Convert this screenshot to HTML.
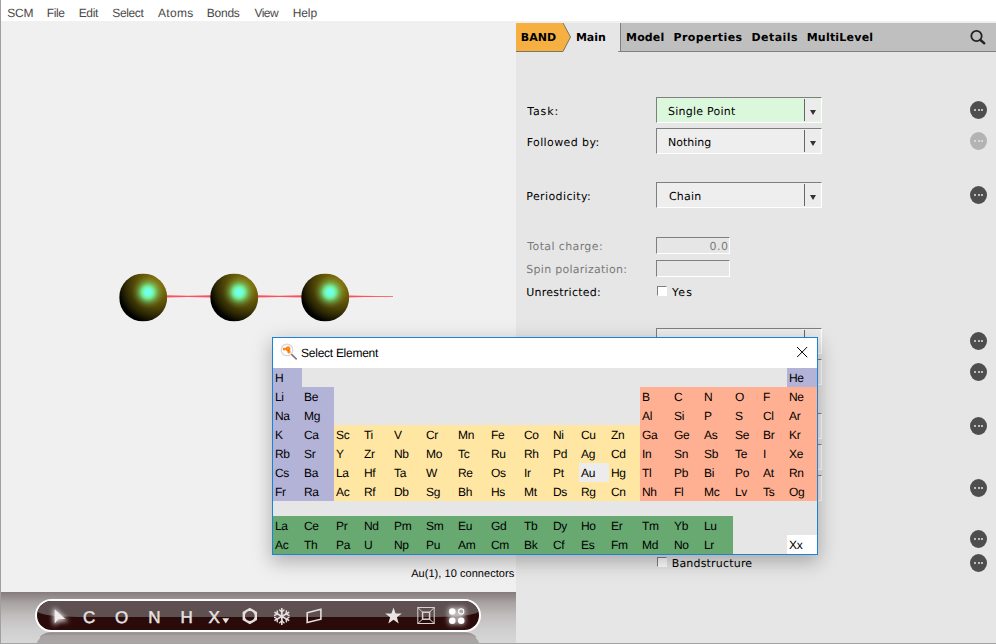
<!DOCTYPE html>
<html><head><meta charset="utf-8"><title>BAND</title>
<style>
html,body{margin:0;padding:0}
body{width:996px;height:644px;position:relative;overflow:hidden;background:#fff;font-family:"DejaVu Sans","Liberation Sans",sans-serif;font-size:11px;color:#000;text-rendering:geometricPrecision}
.abs{position:absolute}
.tx{position:absolute;white-space:nowrap;line-height:20px;font-size:11px;font-family:"DejaVu Sans","Liberation Sans",sans-serif}
.mn{font-family:"Liberation Sans",sans-serif;font-size:12px;color:#4a4a4a}
.tk{font-family:"Liberation Sans",sans-serif;font-size:17px;color:#e8e2e2;-webkit-text-stroke:0.45px #e8e2e2}
.tb{font-weight:bold}
.ar{font-family:"Liberation Sans",sans-serif}
.dis{color:#7a7a7a}
#menubar{position:absolute;left:0;top:0;width:996px;height:21px;background:#fff}
#leftedge{position:absolute;left:0;top:0;width:1px;height:644px;background:#a0a0a0}
#view{position:absolute;left:1px;top:21px;width:515px;height:571px;background:#f0f0f0}
#right{position:absolute;left:516px;top:21px;width:480px;height:623px;background:#e6e6e6}
#rstrip{position:absolute;left:516px;top:21px;width:480px;height:2px;background:#f0f0f0}
#tabbar{position:absolute;left:620px;top:23px;width:376px;height:29px;background:#bfbfbf;border-left:1px solid #808080;border-bottom:1px solid #808080;box-sizing:border-box}
.combo{position:absolute;left:656px;width:166px;box-sizing:border-box;border:1px solid;border-color:#7f7f7f #fff #fff #7f7f7f}
.combo .cb{position:absolute;right:1px;top:1px;bottom:1px;width:15px;background:#ececec;border-left:1px solid #666}
.combo .cb b{position:absolute;left:4.5px;top:10.5px;width:0;height:0;border-left:3.5px solid transparent;border-right:3.5px solid transparent;border-top:5px solid #333}
.entry{position:absolute;left:656px;width:74px;height:17px;box-sizing:border-box;border:1px solid;border-color:#7f7f7f #fff #fff #7f7f7f;background:#e6e6e6}
.chk{position:absolute;left:657px;width:10px;height:10px;box-sizing:border-box;background:#fff;border:1px solid;border-color:#7f7f7f #fff #fff #7f7f7f}
.dots{position:absolute;left:970px;width:17px;height:18px;border-radius:50%}
.dots i{position:absolute;top:8px;width:2.2px;height:2.2px;border-radius:50%;background:#e4e4e4}
.dots i:nth-child(1){left:4px}.dots i:nth-child(2){left:7.5px}.dots i:nth-child(3){left:11px}
#dialog{position:absolute;left:272px;top:337px;width:546px;height:218px;box-sizing:border-box;border:1px solid #1883d7;background:#e6e6e6;box-shadow:0 6px 18px 1px rgba(0,0,0,0.27)}
#dtitle{position:absolute;left:0;top:0;width:544px;height:30px;background:#fff}
.el{position:absolute;height:19px;line-height:19px;box-sizing:border-box;padding-left:2px;padding-top:1px;font-family:"Liberation Sans",sans-serif;font-size:12px;white-space:nowrap;letter-spacing:-0.3px}
.atom{position:absolute;width:48px;height:48px;border-radius:50%;background:radial-gradient(circle at 60% 39%, rgba(115,255,253,1) 0.0px, rgba(115,255,232,1) 2.6px, rgba(114,255,192,0.97) 4.5px, rgba(113,255,166,0.82) 6.5px, rgba(113,255,167,0.52) 8.5px, rgba(112,255,163,0.30) 10.4px, rgba(112,255,160,0.11) 13.0px, rgba(112,255,160,0) 16.2px),radial-gradient(circle at 75% 25%, #84740d 0.0px, #7b6c0c 7.7px, #6e610a 13.2px, #5c5108 18.7px, #4c4307 23.1px, #3d3606 26.4px, #2f2904 29.7px, #231f03 31.9px, #141202 34.7px, #000 38.0px)}
#bbar{position:absolute;left:1px;top:592px;width:515px;height:52px;background:linear-gradient(to bottom,#857b7b 0%,#a9a3a3 21%,#bfbcbc 44%,#d0cfcf 73%,#d8d8d8 100%);overflow:hidden}
#pill{position:absolute;left:34px;top:7.4px;width:446px;height:33px;box-sizing:border-box;border:2px solid #fff;border-radius:17px;background:#2b0a0a;overflow:hidden}
#gloss{position:absolute;left:0;top:0;width:442px;height:15.5px;background:#5e5050;border-radius:14px 14px 60px 60px / 14px 14px 9px 9px}
#refl{position:absolute;left:34px;top:40.4px;width:446px;height:33px;box-sizing:border-box;border:1.5px solid rgba(225,225,225,0.75);border-top-color:rgba(150,142,142,0.6);border-radius:17px;background:linear-gradient(to bottom,#938c8c 0px,#a8a2a2 3px,#aca7a7 12px)}
#botline{position:absolute;left:0;top:643px;width:996px;height:1px;background:#a3a3a3}
.tl{position:absolute;color:#e9e4e4;font-family:"Liberation Sans",sans-serif;font-size:17.5px;line-height:20px}
</style></head><body>
<div id="menubar">
<span class="tx mn" style="left:7.3px;top:3px;letter-spacing:-0.25px;">SCM</span><span class="tx mn" style="left:46.8px;top:3px;letter-spacing:-0.43px;">File</span><span class="tx mn" style="left:78.7px;top:3px;letter-spacing:-0.33px;">Edit</span><span class="tx mn" style="left:112.3px;top:3px;letter-spacing:-0.36px;">Select</span><span class="tx mn" style="left:158.1px;top:3px;letter-spacing:0.26px;">Atoms</span><span class="tx mn" style="left:206.8px;top:3px;letter-spacing:-0.25px;">Bonds</span><span class="tx mn" style="left:254.5px;top:3px;letter-spacing:-0.58px;">View</span><span class="tx mn" style="left:292.7px;top:3px;letter-spacing:-0.09px;">Help</span>
</div>
<div id="view">
  <svg class="abs" style="left:0;top:0" width="515" height="571" viewBox="0 0 515 571"><path fill="#ff4f5c" d="M164 274.29999999999995 Q187.5 275.15 211 274.29999999999995 L211 276.5 Q187.5 275.65 164 276.5 Z M255 274.29999999999995 Q278.5 275.15 302 274.29999999999995 L302 276.5 Q278.5 275.65 255 276.5 Z M346 274.29999999999995 Q358 274.95 392 275.0 L392 275.79999999999995 Q358 275.84999999999997 346 276.5 Z"/></svg>
  <div class="atom" style="left:118px;top:252px;transform:translate(0.2px,0.5px)"></div>
  <div class="atom" style="left:209px;top:252px;transform:translate(0.2px,0.5px)"></div>
  <div class="atom" style="left:300px;top:252px;transform:translate(0.2px,0.5px)"></div>
</div>
<span class="tx ar" style="left:411.2px;top:564px;letter-spacing:0.05px;">Au(1), 10 connectors</span>
<div id="bbar">
  <div id="refl"></div>
  <div id="pill"><div id="gloss"></div></div>
</div>
<span class="tx tk" style="left:83.0px;top:608px;letter-spacing:0.0px;">C</span><span class="tx tk" style="left:115.0px;top:608px;letter-spacing:0.0px;">O</span><span class="tx tk" style="left:148.2px;top:608px;letter-spacing:0.0px;">N</span><span class="tx tk" style="left:180.4px;top:608px;letter-spacing:0.0px;">H</span><span class="tx tk" style="left:208.4px;top:608px;letter-spacing:0.0px;">X</span>
<svg class="abs" style="left:35px;top:599px" width="446" height="34" viewBox="35 599 446 34">
 <defs><filter id="gl" x="-80%" y="-80%" width="260%" height="260%"><feGaussianBlur stdDeviation="2.6"/></filter></defs>
 <g fill="#fff" filter="url(#gl)" opacity="0.9"><path d="M53.5 607.5 L53.5 625.5 L59 621.2 L68.5 621.2 Z"/><path d="M54 608.5 L54 624.5 L58.3 620.2 L67 620.2 Z"/></g>
 <path d="M54.7 609.2 L54.7 623.6 L58.5 619.1 L65.3 619.1 Z" fill="#f1eded"/>
 <path d="M222.3 618.2 H229.2 L225.75 623.6 Z" fill="#e8e2e2"/>
 <path fill-rule="evenodd" fill="#e4dede" d="M249.8 607.8 L257 611.9 L257 620.1 L249.8 624.2 L242.6 620.1 L242.6 611.9 Z M249.8 611.1 A4.9 4.9 0 1 0 249.8 620.9 A4.9 4.9 0 1 0 249.8 611.1 Z"/>
 <g stroke="#e4dede" stroke-width="1.7" stroke-linecap="round" fill="none">
  <path d="M281.8 608.6 V624.2 M275 612.5 L288.6 620.3 M275 620.3 L288.6 612.5"/>
  <path stroke-width="1.4" d="M279.6 610 L281.8 612 L284 610 M279.6 622.8 L281.8 620.8 L284 622.8 M274.6 615.4 L277.5 614 L277.2 610.9 M289 615.4 L286.1 614 L286.4 610.9 M274.6 617.4 L277.5 618.8 L277.2 621.9 M289 617.4 L286.1 618.8 L286.4 621.9"/>
 </g>
 <path d="M307.2 612.8 L320.9 609.2 L320.9 619.2 L307.2 622.6 Z" fill="none" stroke="#e4dede" stroke-width="1.6" stroke-linejoin="miter"/>
 <path fill="#e9e4e4" d="M393.5 607.4 L395.6 613.4 L401.9 613.5 L396.9 617.3 L398.7 623.4 L393.5 619.8 L388.3 623.4 L390.1 617.3 L385.1 613.5 L391.4 613.4 Z"/>
 <g fill="none" stroke="#d9d2d2"><rect x="417.8" y="607.5" width="16.4" height="16" stroke-width="1"/><rect x="422.6" y="612.2" width="7" height="7" stroke-width="1.5"/><path stroke-width="1" d="M417.8 607.5 L422.6 612.2 M434.2 607.5 L429.6 612.2 M417.8 623.5 L422.6 619.2 M434.2 623.5 L429.6 619.2"/></g>
 <g filter="url(#gl)" fill="#fff" opacity="0.6"><circle cx="456.7" cy="616.1" r="8"/><circle cx="452.3" cy="611.5" r="4.5"/><circle cx="461.2" cy="620.7" r="4.5"/><circle cx="452.3" cy="620.7" r="4.5"/><circle cx="461.2" cy="611.5" r="4.5"/></g>
 <circle cx="452.3" cy="611.5" r="3.3" fill="#fff"/><circle cx="452.3" cy="620.7" r="3.3" fill="#fff"/><circle cx="461.2" cy="620.7" r="3.3" fill="#fff"/><circle cx="461.2" cy="611.5" r="2.6" fill="none" stroke="#fff" stroke-width="1.1"/>
</svg>
<div id="right"></div>
<div id="rstrip"></div>
<svg class="abs" style="left:516px;top:23px" width="56" height="30" viewBox="0 0 56 30"><path d="M0 0 H47 L54.5 14 L47 28.5 H0 Z" fill="#f5b041"/><path d="M0 28.5 H47 L54.5 14 L47 0" fill="none" stroke="#7a7465" stroke-width="1"/></svg>
<div id="tabbar"></div><div class="abs" style="left:618px;top:51px;width:2px;height:1px;background:#8a8a8a"></div>
<span class="tx tb" style="left:520.7px;top:28px;letter-spacing:0.09px;">BAND</span><span class="tx tb" style="left:575.9px;top:28px;letter-spacing:-0.02px;">Main</span><span class="tx tb" style="left:626.1px;top:28px;letter-spacing:0.12px;">Model</span><span class="tx tb" style="left:673.5px;top:28px;letter-spacing:0.42px;">Properties</span><span class="tx tb" style="left:751.5px;top:28px;letter-spacing:0.46px;">Details</span><span class="tx tb" style="left:806.7px;top:28px;letter-spacing:0.22px;">MultiLevel</span>
<svg class="abs" style="left:966px;top:26px" width="24" height="22" viewBox="0 0 24 22"><circle cx="10.5" cy="10" r="5.2" fill="none" stroke="#222" stroke-width="1.8"/><path d="M14.5 14 L18.3 17.3" stroke="#222" stroke-width="2.4" stroke-linecap="round"/></svg>

<span class="tx " style="left:527.2px;top:102px;letter-spacing:0.87px;">Task:</span>
<div class="combo" style="top:97px;height:26px;background:#dcf8dc"><span class="cb"><b></b></span></div><span class="tx " style="left:668.0px;top:102px;letter-spacing:0.24px;">Single Point</span>
<div class="dots" style="top:101px;background:#4e4e4e"><i></i><i></i><i></i></div>
<span class="tx " style="left:526.7px;top:133px;letter-spacing:0.4px;">Followed by:</span>
<div class="combo" style="top:128px;height:26px;background:#eeeeee"><span class="cb"><b></b></span></div><span class="tx " style="left:668.0px;top:133px;letter-spacing:-0.0px;">Nothing</span>
<div class="dots" style="top:132px;background:#b3b3b3"><i></i><i></i><i></i></div>
<span class="tx " style="left:526.3px;top:187px;letter-spacing:0.39px;">Periodicity:</span>
<div class="combo" style="top:182px;height:26px;background:#eeeeee"><span class="cb"><b></b></span></div><span class="tx " style="left:669.0px;top:187px;letter-spacing:0.18px;">Chain</span>
<div class="dots" style="top:186px;background:#4e4e4e"><i></i><i></i><i></i></div>
<span class="tx dis" style="left:527.3px;top:237px;letter-spacing:0.38px;">Total charge:</span>
<div class="entry" style="top:237px"></div><span class="tx dis" style="left:709.6px;top:237px;letter-spacing:0.51px;">0.0</span>
<span class="tx dis" style="left:526.3px;top:260px;letter-spacing:0.28px;">Spin polarization:</span>
<div class="entry" style="top:260px"></div>
<span class="tx " style="left:526.3px;top:283px;letter-spacing:0.24px;">Unrestricted:</span>
<div class="chk" style="top:286px"></div>
<span class="tx " style="left:672.0px;top:283px;letter-spacing:1.1px;">Yes</span>
<div class="combo" style="top:328px;height:26px;background:#eeeeee"><span class="cb"><b></b></span></div>
<div class="dots" style="top:332px;background:#4e4e4e"><i></i><i></i><i></i></div>
<div class="combo" style="top:359px;height:26px;background:#eeeeee"><span class="cb"><b></b></span></div>
<div class="dots" style="top:363px;background:#4e4e4e"><i></i><i></i><i></i></div>
<div class="combo" style="top:413px;height:26px;background:#eeeeee"><span class="cb"><b></b></span></div>
<div class="dots" style="top:417px;background:#4e4e4e"><i></i><i></i><i></i></div>
<div class="combo" style="top:444px;height:26px;background:#eeeeee"><span class="cb"><b></b></span></div>
<div class="combo" style="top:475px;height:26px;background:#eeeeee"><span class="cb"><b></b></span></div>
<div class="dots" style="top:479px;background:#4e4e4e"><i></i><i></i><i></i></div>
<div class="dots" style="top:530px;background:#4e4e4e"><i></i><i></i><i></i></div>
<div class="chk" style="top:557px"></div>
<span class="tx " style="left:671.7px;top:554px;letter-spacing:0.19px;">Bandstructure</span>
<div class="dots" style="top:554px;background:#4e4e4e"><i></i><i></i><i></i></div>

<div id="dialog">
  <div id="dtitle">
  <svg class="abs" style="left:524px;top:9px" width="12" height="12" viewBox="0 0 12 12"><path d="M0 0 L10.2 10.2 M10.2 0 L0 10.2" stroke="#000" stroke-width="1" fill="none"/></svg>
  </div>
<div class="el" style="left:0px;top:30px;width:29px;background:#b3b3d8">H</div>
<div class="el" style="left:514px;top:30px;width:30px;background:#b3b3d8">He</div>
<div class="el" style="left:0px;top:49px;width:29px;background:#b3b3d8">Li</div>
<div class="el" style="left:29px;top:49px;width:32px;background:#b3b3d8">Be</div>
<div class="el" style="left:367px;top:49px;width:32px;background:#ffb092">B</div>
<div class="el" style="left:399px;top:49px;width:30px;background:#ffb092">C</div>
<div class="el" style="left:429px;top:49px;width:31px;background:#ffb092">N</div>
<div class="el" style="left:460px;top:49px;width:28px;background:#ffb092">O</div>
<div class="el" style="left:488px;top:49px;width:26px;background:#ffb092">F</div>
<div class="el" style="left:514px;top:49px;width:30px;background:#ffb092">Ne</div>
<div class="el" style="left:0px;top:68px;width:29px;background:#b3b3d8">Na</div>
<div class="el" style="left:29px;top:68px;width:32px;background:#b3b3d8">Mg</div>
<div class="el" style="left:367px;top:68px;width:32px;background:#ffb092">Al</div>
<div class="el" style="left:399px;top:68px;width:30px;background:#ffb092">Si</div>
<div class="el" style="left:429px;top:68px;width:31px;background:#ffb092">P</div>
<div class="el" style="left:460px;top:68px;width:28px;background:#ffb092">S</div>
<div class="el" style="left:488px;top:68px;width:26px;background:#ffb092">Cl</div>
<div class="el" style="left:514px;top:68px;width:30px;background:#ffb092">Ar</div>
<div class="el" style="left:0px;top:87px;width:29px;background:#b3b3d8">K</div>
<div class="el" style="left:29px;top:87px;width:32px;background:#b3b3d8">Ca</div>
<div class="el" style="left:61px;top:87px;width:28px;background:#ffe7a3">Sc</div>
<div class="el" style="left:89px;top:87px;width:30px;background:#ffe7a3">Ti</div>
<div class="el" style="left:119px;top:87px;width:32px;background:#ffe7a3">V</div>
<div class="el" style="left:151px;top:87px;width:32px;background:#ffe7a3">Cr</div>
<div class="el" style="left:183px;top:87px;width:33px;background:#ffe7a3">Mn</div>
<div class="el" style="left:216px;top:87px;width:33px;background:#ffe7a3">Fe</div>
<div class="el" style="left:249px;top:87px;width:29px;background:#ffe7a3">Co</div>
<div class="el" style="left:278px;top:87px;width:28px;background:#ffe7a3">Ni</div>
<div class="el" style="left:306px;top:87px;width:30px;background:#ffe7a3">Cu</div>
<div class="el" style="left:336px;top:87px;width:31px;background:#ffe7a3">Zn</div>
<div class="el" style="left:367px;top:87px;width:32px;background:#ffb092">Ga</div>
<div class="el" style="left:399px;top:87px;width:30px;background:#ffb092">Ge</div>
<div class="el" style="left:429px;top:87px;width:31px;background:#ffb092">As</div>
<div class="el" style="left:460px;top:87px;width:28px;background:#ffb092">Se</div>
<div class="el" style="left:488px;top:87px;width:26px;background:#ffb092">Br</div>
<div class="el" style="left:514px;top:87px;width:30px;background:#ffb092">Kr</div>
<div class="el" style="left:0px;top:106px;width:29px;background:#b3b3d8">Rb</div>
<div class="el" style="left:29px;top:106px;width:32px;background:#b3b3d8">Sr</div>
<div class="el" style="left:61px;top:106px;width:28px;background:#ffe7a3">Y</div>
<div class="el" style="left:89px;top:106px;width:30px;background:#ffe7a3">Zr</div>
<div class="el" style="left:119px;top:106px;width:32px;background:#ffe7a3">Nb</div>
<div class="el" style="left:151px;top:106px;width:32px;background:#ffe7a3">Mo</div>
<div class="el" style="left:183px;top:106px;width:33px;background:#ffe7a3">Tc</div>
<div class="el" style="left:216px;top:106px;width:33px;background:#ffe7a3">Ru</div>
<div class="el" style="left:249px;top:106px;width:29px;background:#ffe7a3">Rh</div>
<div class="el" style="left:278px;top:106px;width:28px;background:#ffe7a3">Pd</div>
<div class="el" style="left:306px;top:106px;width:30px;background:#ffe7a3">Ag</div>
<div class="el" style="left:336px;top:106px;width:31px;background:#ffe7a3">Cd</div>
<div class="el" style="left:367px;top:106px;width:32px;background:#ffb092">In</div>
<div class="el" style="left:399px;top:106px;width:30px;background:#ffb092">Sn</div>
<div class="el" style="left:429px;top:106px;width:31px;background:#ffb092">Sb</div>
<div class="el" style="left:460px;top:106px;width:28px;background:#ffb092">Te</div>
<div class="el" style="left:488px;top:106px;width:26px;background:#ffb092">I</div>
<div class="el" style="left:514px;top:106px;width:30px;background:#ffb092">Xe</div>
<div class="el" style="left:0px;top:125px;width:29px;background:#b3b3d8">Cs</div>
<div class="el" style="left:29px;top:125px;width:32px;background:#b3b3d8">Ba</div>
<div class="el" style="left:61px;top:125px;width:28px;background:#ffe7a3">La</div>
<div class="el" style="left:89px;top:125px;width:30px;background:#ffe7a3">Hf</div>
<div class="el" style="left:119px;top:125px;width:32px;background:#ffe7a3">Ta</div>
<div class="el" style="left:151px;top:125px;width:32px;background:#ffe7a3">W</div>
<div class="el" style="left:183px;top:125px;width:33px;background:#ffe7a3">Re</div>
<div class="el" style="left:216px;top:125px;width:33px;background:#ffe7a3">Os</div>
<div class="el" style="left:249px;top:125px;width:29px;background:#ffe7a3">Ir</div>
<div class="el" style="left:278px;top:125px;width:28px;background:#ffe7a3">Pt</div>
<div class="el" style="left:306px;top:125px;width:30px;background:#ececec">Au</div>
<div class="el" style="left:336px;top:125px;width:31px;background:#ffe7a3">Hg</div>
<div class="el" style="left:367px;top:125px;width:32px;background:#ffb092">Tl</div>
<div class="el" style="left:399px;top:125px;width:30px;background:#ffb092">Pb</div>
<div class="el" style="left:429px;top:125px;width:31px;background:#ffb092">Bi</div>
<div class="el" style="left:460px;top:125px;width:28px;background:#ffb092">Po</div>
<div class="el" style="left:488px;top:125px;width:26px;background:#ffb092">At</div>
<div class="el" style="left:514px;top:125px;width:30px;background:#ffb092">Rn</div>
<div class="el" style="left:0px;top:144px;width:29px;background:#b3b3d8">Fr</div>
<div class="el" style="left:29px;top:144px;width:32px;background:#b3b3d8">Ra</div>
<div class="el" style="left:61px;top:144px;width:28px;background:#ffe7a3">Ac</div>
<div class="el" style="left:89px;top:144px;width:30px;background:#ffe7a3">Rf</div>
<div class="el" style="left:119px;top:144px;width:32px;background:#ffe7a3">Db</div>
<div class="el" style="left:151px;top:144px;width:32px;background:#ffe7a3">Sg</div>
<div class="el" style="left:183px;top:144px;width:33px;background:#ffe7a3">Bh</div>
<div class="el" style="left:216px;top:144px;width:33px;background:#ffe7a3">Hs</div>
<div class="el" style="left:249px;top:144px;width:29px;background:#ffe7a3">Mt</div>
<div class="el" style="left:278px;top:144px;width:28px;background:#ffe7a3">Ds</div>
<div class="el" style="left:306px;top:144px;width:30px;background:#ffe7a3">Rg</div>
<div class="el" style="left:336px;top:144px;width:31px;background:#ffe7a3">Cn</div>
<div class="el" style="left:367px;top:144px;width:32px;background:#ffb092">Nh</div>
<div class="el" style="left:399px;top:144px;width:30px;background:#ffb092">Fl</div>
<div class="el" style="left:429px;top:144px;width:31px;background:#ffb092">Mc</div>
<div class="el" style="left:460px;top:144px;width:28px;background:#ffb092">Lv</div>
<div class="el" style="left:488px;top:144px;width:26px;background:#ffb092">Ts</div>
<div class="el" style="left:514px;top:144px;width:30px;background:#ffb092">Og</div>
<div class="el" style="left:0px;top:178px;width:29px;background:#68a972">La</div>
<div class="el" style="left:29px;top:178px;width:32px;background:#68a972">Ce</div>
<div class="el" style="left:61px;top:178px;width:28px;background:#68a972">Pr</div>
<div class="el" style="left:89px;top:178px;width:30px;background:#68a972">Nd</div>
<div class="el" style="left:119px;top:178px;width:32px;background:#68a972">Pm</div>
<div class="el" style="left:151px;top:178px;width:32px;background:#68a972">Sm</div>
<div class="el" style="left:183px;top:178px;width:33px;background:#68a972">Eu</div>
<div class="el" style="left:216px;top:178px;width:33px;background:#68a972">Gd</div>
<div class="el" style="left:249px;top:178px;width:29px;background:#68a972">Tb</div>
<div class="el" style="left:278px;top:178px;width:28px;background:#68a972">Dy</div>
<div class="el" style="left:306px;top:178px;width:30px;background:#68a972">Ho</div>
<div class="el" style="left:336px;top:178px;width:31px;background:#68a972">Er</div>
<div class="el" style="left:367px;top:178px;width:32px;background:#68a972">Tm</div>
<div class="el" style="left:399px;top:178px;width:30px;background:#68a972">Yb</div>
<div class="el" style="left:429px;top:178px;width:31px;background:#68a972">Lu</div>
<div class="el" style="left:0px;top:197px;width:29px;background:#68a972">Ac</div>
<div class="el" style="left:29px;top:197px;width:32px;background:#68a972">Th</div>
<div class="el" style="left:61px;top:197px;width:28px;background:#68a972">Pa</div>
<div class="el" style="left:89px;top:197px;width:30px;background:#68a972">U</div>
<div class="el" style="left:119px;top:197px;width:32px;background:#68a972">Np</div>
<div class="el" style="left:151px;top:197px;width:32px;background:#68a972">Pu</div>
<div class="el" style="left:183px;top:197px;width:33px;background:#68a972">Am</div>
<div class="el" style="left:216px;top:197px;width:33px;background:#68a972">Cm</div>
<div class="el" style="left:249px;top:197px;width:29px;background:#68a972">Bk</div>
<div class="el" style="left:278px;top:197px;width:28px;background:#68a972">Cf</div>
<div class="el" style="left:306px;top:197px;width:30px;background:#68a972">Es</div>
<div class="el" style="left:336px;top:197px;width:31px;background:#68a972">Fm</div>
<div class="el" style="left:367px;top:197px;width:32px;background:#68a972">Md</div>
<div class="el" style="left:399px;top:197px;width:30px;background:#68a972">No</div>
<div class="el" style="left:429px;top:197px;width:31px;background:#68a972">Lr</div>
<div class="el" style="left:514px;top:197px;width:30px;background:#ffffff">Xx</div>
</div>
<svg class="abs" style="left:278px;top:341px" width="22" height="22" viewBox="278 341 22 22"><circle cx="287" cy="349.9" r="5.8" fill="#fff" stroke="#d6d6d6" stroke-width="1.2"/><circle cx="284.2" cy="349" r="1.5" fill="#ff8a1a"/><circle cx="288" cy="348.7" r="2.5" fill="#ff8c1c"/><circle cx="288.9" cy="351.7" r="1.7" fill="#ff8410"/><circle cx="286" cy="349" r="0.8" fill="#f4600a"/><circle cx="288.4" cy="350.5" r="0.7" fill="#f4600a"/><path d="M291.8 354.6 L296.2 358.9" stroke="#7d7d7d" stroke-width="1.7" stroke-linecap="round"/></svg>
<span class="tx ar" style="left:301.1px;top:343px;letter-spacing:-0.27px;font-size:12px">Select Element</span>
<div id="leftedge"></div>
<div id="botline"></div>
</body></html>
